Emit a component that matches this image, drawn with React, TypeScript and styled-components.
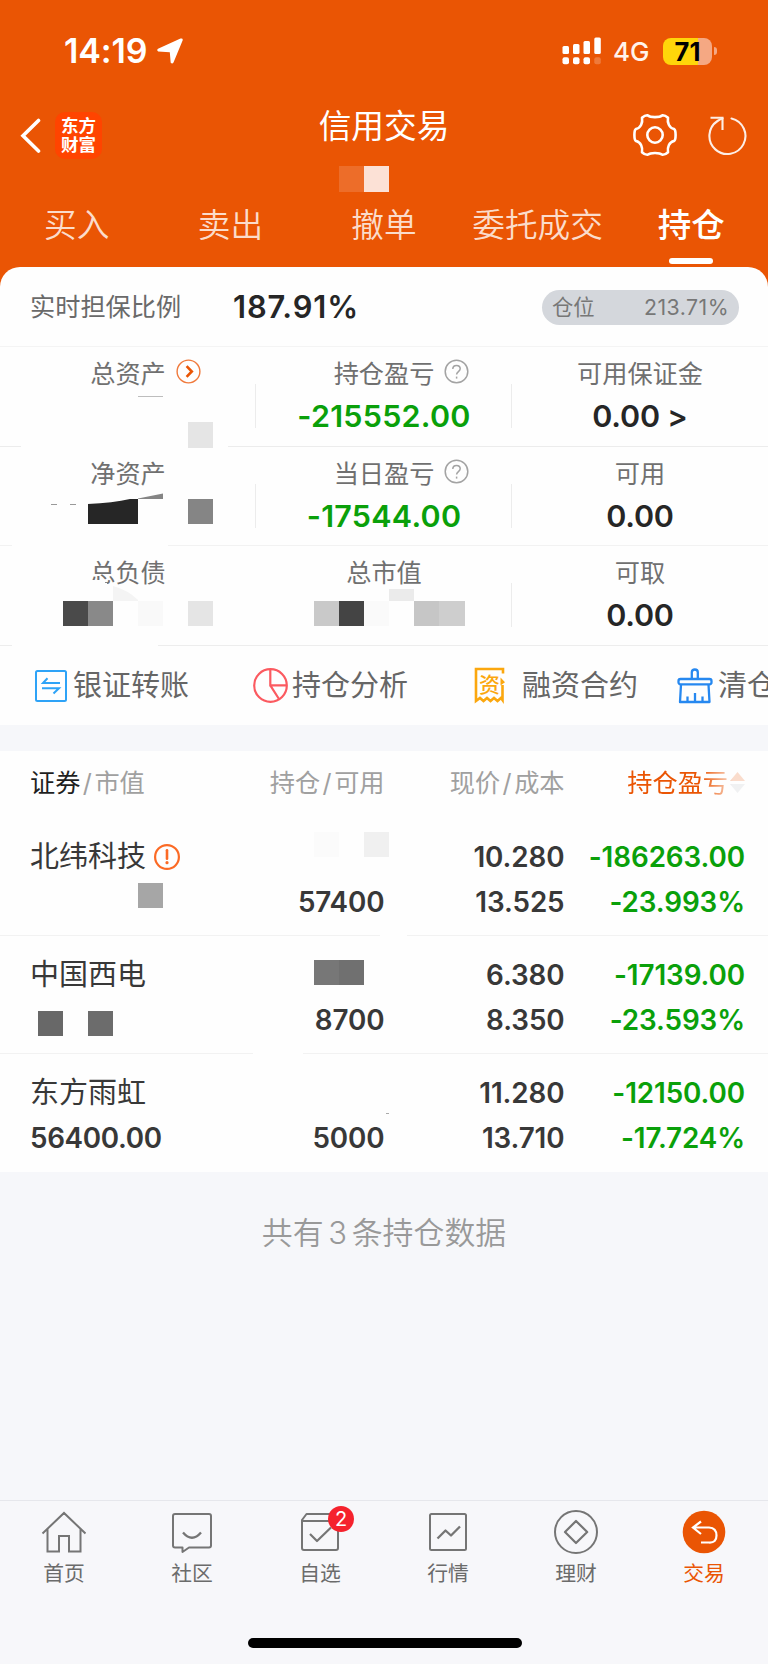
import React from "react";
import styled, { createGlobalStyle } from "styled-components";

const ORANGE = "#ea5504";
const GREEN = "#0aa00a";

const GlobalStyle = createGlobalStyle`
  *, *::before, *::after { box-sizing: border-box; }
  body {
    margin: 0;
    background: #f6f7fa;
    font-family: Inter, "Noto Sans CJK SC", sans-serif;
    color: #333;
  }
  svg { display: block; flex: none; }
`;

const Screen = styled.div`
  width: 768px;
  height: 1664px;
  display: flex;
  flex-direction: column;
  overflow: hidden;
  background: #f6f7fa;
`;

/* ---------- header ---------- */

const Header = styled.header`
  height: 287px;
  flex: none;
  background: ${ORANGE};
  color: #fff;
`;

const StatusBar = styled.div`
  height: 102px;
  display: flex;
  align-items: center;
  padding: 0 51px 0 64px;
`;

const Clock = styled.span`
  font-size: 34px;
  font-weight: 600;
  line-height: 40px;
  letter-spacing: -0.1px;
  width: 93px;
`;

const StatusRight = styled.div`
  margin-left: auto;
  display: flex;
  align-items: center;
`;

const Network = styled.span`
  font-size: 26px;
  font-weight: 500;
  line-height: 30px;
  padding-top: 2px;
  width: 50px;
  margin-left: 11px;
  color: #fff3ec;
`;

const Battery = styled.div`
  width: 49px;
  height: 27px;
  border-radius: 8px;
  background: linear-gradient(90deg, #ffd60a 0 35px, #f5a883 35px);
  color: #000;
  font-size: 25.5px;
  font-weight: 700;
  line-height: 28px;
  text-align: center;
`;

const BatteryTip = styled.div`
  width: 3px;
  height: 8px;
  margin-left: 2px;
  border-radius: 0 4px 4px 0;
  background: #f5a883;
`;

const TitleBar = styled.div`
  height: 94px;
  display: grid;
  grid-template-columns: 1fr 200px 1fr;
`;

const TitleLeft = styled.div`
  display: flex;
  align-items: flex-start;
  padding: 10px 0 0 20px;
  gap: 13px;
`;

const BackIcon = styled.svg`
  margin-top: 6px;
`;

const Logo = styled.div`
  width: 47px;
  height: 47px;
  border-radius: 10px;
  background: #ff4400;
  font-size: 17.5px;
  font-weight: 700;
  line-height: 19px;
  text-align: center;
  padding-top: 4px;
`;

const TitleCenter = styled.div`
  display: flex;
  flex-direction: column;
  align-items: center;
`;

const Title = styled.h1`
  margin: 4px 0 0;
  font-size: 32.7px;
  font-weight: 400;
  line-height: 40px;
`;

const AccountMask = styled.div`
  width: 50px;
  height: 26px;
  margin: 20px 40px 0 0;
  background: linear-gradient(90deg, #ed6d29 50%, #fce1d6 50%);
`;

const TitleRight = styled.div`
  display: flex;
  justify-content: flex-end;
  padding: 11px 20px 0 0;
  gap: 29px;
`;

const Tabs = styled.nav`
  display: grid;
  grid-template-columns: repeat(5, 1fr);
  padding-top: 9px;
`;

const Tab = styled.div<{ $active?: boolean }>`
  display: flex;
  flex-direction: column;
  align-items: center;
  font-size: ${(p) => (p.$active ? 33.5 : 32.7)}px;
  font-weight: ${(p) => (p.$active ? 500 : 350)};
  line-height: 40px;
  color: ${(p) => (p.$active ? "#fff" : "#fbdccb")};
`;

const TabLine = styled.div`
  width: 44px;
  height: 6px;
  margin-top: 13px;
  border-radius: 3px;
  background: #fff;
`;

/* ---------- account summary ---------- */

const Card = styled.section`
  background: #fefefe;
  border-radius: 20px 20px 0 0;
  margin-top: -20px;
  flex: none;
`;

const RatioRow = styled.div`
  height: 80px;
  display: flex;
  align-items: center;
  padding: 1px 29px 0 30px;
  border-bottom: 1px solid #f4f4f4;
`;

const RatioLabel = styled.span`
  width: 203px;
  font-size: 25.2px;
  line-height: 32px;
  color: #6a6a6a;
`;

const RatioValue = styled.span`
  font-size: 30.8px;
  font-weight: 600;
  line-height: 36px;
  letter-spacing: 0.9px;
  color: #262626;
`;

const Pill = styled.div`
  width: 197px;
  height: 35px;
  margin-left: auto;
  padding: 0 10px;
  border-radius: 18px;
  background: #d4d7dc;
  color: #777;
  font-size: 21.3px;
  line-height: 35px;
  display: flex;
  justify-content: space-between;
`;

const PillValue = styled.span`
  letter-spacing: 0.45px;
`;

const AssetRow = styled.div<{ $h: number; $line: string }>`
  height: ${(p) => p.$h}px;
  display: grid;
  grid-template-columns: repeat(3, 256px);
  border-bottom: 1px solid ${(p) => p.$line};
`;

const AssetCell = styled.div<{ $sep?: boolean }>`
  position: relative;
  display: flex;
  flex-direction: column;
  align-items: center;
  padding-top: 14px;

  &::after {
    content: "";
    position: absolute;
    right: 0;
    top: 37px;
    width: 1px;
    height: 44px;
    background: ${(p) => (p.$sep ? "#ececec" : "transparent")};
  }
`;

const AssetLabel = styled.div`
  position: relative;
  font-size: 25.2px;
  line-height: 26px;
  color: #707070;
`;

const LabelIcon = styled.svg`
  position: absolute;
  left: calc(100% + 10px);
  top: -2px;
`;

const AssetValue = styled.div<{ $green?: boolean }>`
  margin-top: 13px;
  font-size: 30.5px;
  font-weight: 600;
  line-height: 32px;
  letter-spacing: ${(p) => (p.$green ? 0.25 : -0.2)}px;
  color: ${(p) => (p.$green ? GREEN : "#262626")};
`;

const CellMask = styled.svg`
  position: absolute;
  left: 0;
  top: 0;
  overflow: visible;
  z-index: 1;
`;

/* ---------- shortcuts ---------- */

const Shortcuts = styled.div`
  height: 79px;
  display: flex;
  align-items: center;
  overflow: hidden;
  padding-left: 35px;
`;

const Shortcut = styled.div<{ $w: number; $gap: number }>`
  flex: none;
  width: ${(p) => p.$w}px;
  display: flex;
  align-items: center;
  gap: ${(p) => p.$gap}px;
  font-size: 29px;
  line-height: 36px;
  color: #666;
  white-space: nowrap;
`;

/* ---------- positions ---------- */

const Positions = styled.section`
  margin-top: 26px;
  flex: none;
  background: #fefefe;
`;

const columns = `
  display: grid;
  grid-template-columns: 208.5px 146px 180px 180.5px;
  padding: 0 23px 0 30px;
`;

const HeadRow = styled.div`
  ${columns}
  height: 67px;
  padding-top: 16px;
  font-size: 25.2px;
  line-height: 32px;
  color: #a0a0a0;
`;

const HeadCell = styled.div<{ $right?: boolean }>`
  display: flex;
  justify-content: ${(p) => (p.$right ? "flex-end" : "flex-start")};
`;

const Slash = styled.span`
  width: 14px;
  text-align: center;
`;

const Strong = styled.span`
  color: #1f1f1f;
  font-weight: 400;
`;

const SortCell = styled.div`
  display: flex;
  justify-content: flex-end;
  align-items: center;
  height: 32px;
  gap: 2px;
  color: ${ORANGE};
  mask-image: linear-gradient(90deg, #000 0 136px, rgba(0, 0, 0, 0.35) 162px, rgba(0, 0, 0, 0.2) 168px);
`;

const StockRow = styled.div`
  ${columns}
  position: relative;
  height: 118px;
  padding-top: 20.5px;
  border-bottom: 1px solid #f2f2f2;

  &:last-child { border-bottom: 0; }
`;

const StockCell = styled.div<{ $right?: boolean; $green?: boolean }>`
  display: flex;
  flex-direction: column;
  align-items: ${(p) => (p.$right ? "flex-end" : "flex-start")};
  gap: 9px;
  font-size: 27.8px;
  font-weight: 600;
  line-height: 36px;
  letter-spacing: ${(p) => (p.$right ? -0.1 : -0.35)}px;
  white-space: nowrap;
  color: ${(p) => (p.$green ? GREEN : "#383838")};
`;

const Line = styled.div`
  height: 36px;
`;

const StockName = styled.div`
  display: flex;
  align-items: center;
  gap: 8px;
  height: 36px;
  font-size: 29px;
  font-weight: 400;
  letter-spacing: 0;
`;

const Summary = styled.p`
  margin: 41px 0 0;
  flex: 1;
  text-align: center;
  font-size: 30.9px;
  line-height: 40px;
  font-weight: 350;
  color: #999;
  word-spacing: -4px;
`;

/* ---------- bottom bar ---------- */

const BottomBar = styled.footer`
  height: 164px;
  flex: none;
  border-top: 1px solid #e6e7ec;
  background: #f7f7fa;
  display: flex;
  flex-direction: column;
  align-items: center;
`;

const BottomTabs = styled.div`
  width: 100%;
  display: grid;
  grid-template-columns: repeat(6, 1fr);
  padding-top: 8px;
`;

const BottomTab = styled.div<{ $active?: boolean }>`
  position: relative;
  display: flex;
  flex-direction: column;
  align-items: center;
  gap: 7px;
  font-size: 20.8px;
  line-height: 24px;
  color: ${(p) => (p.$active ? ORANGE : "#6b6b6b")};
`;

const Badge = styled.span`
  position: absolute;
  left: 72px;
  top: -3px;
  width: 26px;
  height: 26px;
  border-radius: 50%;
  background: #f5222d;
  color: #fff;
  font-size: 20px;
  line-height: 26px;
  text-align: center;
`;

const HomeIndicator = styled.div`
  width: 274px;
  height: 10px;
  border-radius: 5px;
  margin: 52px 0 0 2px;
  background: #000;
`;

/* ---------- icons ---------- */

const HelpIcon = () => (
  <LabelIcon width="25" height="25" viewBox="0 0 25 25" fill="none" stroke="#a3a3a3" strokeWidth="1.5">
    <circle cx="12.5" cy="12.5" r="11.3" />
    <path d="M8.8 10.1c0-2.2 1.6-3.7 3.7-3.7s3.7 1.4 3.7 3.4c0 2.7-3.6 3-3.6 5.8" />
    <path d="M12.6 17.6v2" />
  </LabelIcon>
);

const MoreIcon = () => (
  <LabelIcon width="25" height="25" viewBox="0 0 25 25" fill="none" stroke="#f07a3c" strokeWidth="1.4">
    <circle cx="12.5" cy="12.5" r="11.4" />
    <path d="M10.6 7.2l5.2 5.3-5.2 5.3" stroke={ORANGE} strokeWidth="2.6" />
  </LabelIcon>
);

const SignalIcon = () => (
  <svg width="40" height="28" viewBox="0 0 40 28" fill="#fff">
    <rect x="0.5" y="9" width="6.5" height="8" rx="1.5" />
    <rect x="11" y="7" width="6.5" height="10" rx="1.5" />
    <rect x="21.5" y="4" width="6.5" height="13" rx="1.5" />
    <rect x="32.3" y="0.5" width="6.5" height="16.5" rx="1.5" />
    <rect x="0.5" y="20.3" width="6.5" height="7" rx="2" />
    <rect x="11" y="20.3" width="6.5" height="7" rx="2" />
    <rect x="21.5" y="20.3" width="6.5" height="7" rx="2" />
    <rect x="32.3" y="20.3" width="6.5" height="7" rx="2" opacity="0.22" />
  </svg>
);

const GearIcon = () => (
  <svg width="44" height="44" viewBox="-22 -22 44 44" fill="none" stroke="#fff" strokeWidth="2.6" strokeLinejoin="round">
    <path d="M-7.5 -19.800C-4.500 -17.300 4.500 -17.300 7.500 -19.800Q10 -20 13 -17.200C12.200 -12.500 14 -7 19 -6Q20.600 -5.200 20.600 0T19 6C14 7 12.200 12.500 13 17.200Q10 20 7.500 19.800C4.500 17.300 -4.500 17.300 -7.500 19.800Q-10 20 -13 17.200C-12.200 12.500 -14 7 -19 6Q-20.600 5.200 -20.600 0T-19 -6C-14 -7 -12.200 -12.500 -13 -17.200Q-10 -20 -7.500 -19.800Z" />
    <circle r="7.7" />
  </svg>
);

const RefreshIcon = () => (
  <svg width="42" height="44" viewBox="0 0 42 44" fill="none" stroke="#fdeee6" strokeWidth="2.1">
    <path d="M25.500 5.500A18 18 0 1 1 11.500 8Q14.500 6 16.500 5.500" strokeLinecap="round" />
    <path d="M4.500 4.800H16.500V17" />
  </svg>
);

const TransferIcon = () => (
  <svg width="32" height="32" viewBox="0 0 32 32" fill="none" stroke="#2ea3f7" strokeWidth="2">
    <rect x="1" y="1" width="30" height="30" rx="1.500" />
    <path d="M12.500 8.200L8 13H25M7 18.200H24L18.500 23.500" />
  </svg>
);

const PieIcon = () => (
  <svg width="35" height="35" viewBox="0 0 35 35" fill="none" stroke="#fb5a60" strokeWidth="2.2">
    <circle cx="17.500" cy="17.500" r="16.300" />
    <path d="M17.300 1.500V17.300H33.500M17.300 17.300L26 31" />
  </svg>
);

const ContractIcon = () => (
  <svg width="32" height="37" viewBox="0 0 32 37" fill="none" stroke="#fba70e" strokeWidth="2.600">
    <path d="M29 6.500V2H2V34l4-3 3.500 3 3.500-3 3.500 3 3.500-3 3.500 3 3.500-3 1.500 2V18" />
    <path d="M26.500 10.500L31 15.200L26.500 18.500Z" fill="#fba70e" stroke="none" />
    <text x="15.500" y="24.500" fontSize="21" fontWeight="500" textAnchor="middle" fill="#fba70e" stroke="none">资</text>
  </svg>
);

const BroomIcon = () => (
  <svg width="36" height="36" viewBox="0 0 36 36" fill="none" stroke="#2688f0" strokeWidth="2.300" strokeLinejoin="round">
    <path d="M14.800 11V4.200Q14.800 1.500 17.800 1.500T20.800 4.200V11" />
    <rect x="1.500" y="11" width="33" height="5.300" rx="2" />
    <path d="M4 16.500L3 34H32.500L31.500 16.500M10.500 34V28.500M18 34V25M25.500 34V28.500" />
  </svg>
);

const WarnIcon = () => (
  <svg width="26" height="26" viewBox="0 0 26 26" fill="none" stroke="#fb6a25" strokeWidth="2.2">
    <circle cx="13" cy="13" r="11.900" />
    <path d="M13 6.300V14.800" strokeWidth="2.600" strokeLinecap="round" />
    <circle cx="13" cy="18.700" r="1.600" fill="#fb6a25" stroke="none" />
  </svg>
);

const SortIcon = () => (
  <svg width="15" height="22" viewBox="0 0 15 22">
    <path d="M7.500 0L15 9H0Z" fill={ORANGE} />
    <path d="M7.500 21L15 12H0Z" fill="#bbbdc4" />
  </svg>
);

const TabIcon = ({ children }: { children: React.ReactNode }) => (
  <svg width="46" height="46" viewBox="0 0 46 46" fill="none" stroke="#757575" strokeWidth="2" strokeLinejoin="round">
    {children}
  </svg>
);

/* ---------- redaction tiles ---------- */

type Tile = [x: number, y: number, w: number, h: number, fill: string];

const Mask = ({ tiles, children }: { tiles: Tile[]; children?: React.ReactNode }) => (
  <CellMask width="256" height="100" viewBox="0 0 256 100" shapeRendering="crispEdges">
    {tiles.map(([x, y, w, h, fill]) => (
      <rect key={`${x}-${y}`} x={x} y={y} width={w} height={h} fill={fill} />
    ))}
    {children}
  </CellMask>
);

type Stock = {
  name: string;
  warn?: boolean;
  value?: string;
  available: string;
  price: string;
  cost: string;
  profit: string;
  rate: string;
  tiles: Tile[];
};

const stocks: Stock[] = [
  {
    name: "北纬科技",
    warn: true,
    available: "57400",
    price: "10.280",
    cost: "13.525",
    profit: "-186263.00",
    rate: "-23.993%",
    tiles: [
      [314, 14, 25, 25, "#fbfbfb"],
      [364, 14, 25, 25, "#f0f0f0"],
      [138, 65, 25, 25, "#a6a6a6"],
      [380, 117, 27, 1, "#fefefe"],
    ],
  },
  {
    name: "中国西电",
    available: "8700",
    price: "6.380",
    cost: "8.350",
    profit: "-17139.00",
    rate: "-23.593%",
    tiles: [
      [314, 24, 25, 25, "#777777"],
      [339, 24, 25, 25, "#707070"],
      [38, 75, 25, 25, "#686868"],
      [88, 75, 25, 25, "#6c6c6c"],
      [253, 117, 50, 1, "#fefefe"],
    ],
  },
  {
    name: "东方雨虹",
    value: "56400.00",
    available: "5000",
    price: "11.280",
    cost: "13.710",
    profit: "-12150.00",
    rate: "-17.724%",
    tiles: [[386, 59, 3, 1, "#aaaaaa"]],
  },
];

export default function App() {
  return (
    <Screen>
      <GlobalStyle />
      <Header>
        <StatusBar>
          <Clock>14:19</Clock>
          <svg width="26" height="27" viewBox="0 0 26 27" fill="#fff">
            <path d="M23.500 0.600Q26 -0.200 25.700 2.200L16.500 24.500Q15.300 26.500 13.700 24.800L12.800 14.200L1.200 13.500Q-0.700 12.200 1 10.800Z" />
          </svg>
          <StatusRight>
            <SignalIcon />
            <Network>4G</Network>
            <Battery>71</Battery>
            <BatteryTip />
          </StatusRight>
        </StatusBar>
        <TitleBar>
          <TitleLeft>
            <BackIcon width="22" height="36" viewBox="0 0 22 36" fill="none" stroke="#fff" strokeWidth="3.600" strokeLinecap="round">
              <path d="M18.500 2.500L3 17.800L18.500 33" />
            </BackIcon>
            <Logo>
              东方
              <br />
              财富
            </Logo>
          </TitleLeft>
          <TitleCenter>
            <Title>信用交易</Title>
            <AccountMask />
          </TitleCenter>
          <TitleRight>
            <GearIcon />
            <RefreshIcon />
          </TitleRight>
        </TitleBar>
        <Tabs>
          <Tab>买入</Tab>
          <Tab>卖出</Tab>
          <Tab>撤单</Tab>
          <Tab>委托成交</Tab>
          <Tab $active>
            持仓
            <TabLine />
          </Tab>
        </Tabs>
      </Header>

      <Card>
        <RatioRow>
          <RatioLabel>实时担保比例</RatioLabel>
          <RatioValue>187.91%</RatioValue>
          <Pill>
            <span>仓位</span>
            <PillValue>213.71%</PillValue>
          </Pill>
        </RatioRow>

        <AssetRow $h={100} $line="#ececec">
          <AssetCell $sep>
            <AssetLabel>
              总资产
              <MoreIcon />
            </AssetLabel>
            <Mask
              tiles={[
                [21, 98, 207, 3, "#fefefe"],
                [188, 75, 25, 26, "#e5e5e5"],
              ]}
            >
              <path d="M138 49.500L144 48.500H163V49.500Z" fill="#bdbdbd" />
            </Mask>
          </AssetCell>
          <AssetCell $sep>
            <AssetLabel>
              持仓盈亏
              <HelpIcon />
            </AssetLabel>
            <AssetValue $green>-215552.00</AssetValue>
          </AssetCell>
          <AssetCell>
            <AssetLabel>可用保证金</AssetLabel>
            <AssetValue>0.00 &gt;</AssetValue>
          </AssetCell>
        </AssetRow>

        <AssetRow $h={99} $line="#f2f2f2">
          <AssetCell $sep>
            <AssetLabel>净资产</AssetLabel>
            <Mask
              tiles={[
                [12, 97, 156, 3, "#fefefe"],
                [188, 52, 25, 25, "#858585"],
                [51, 57, 6, 1, "#999999"],
                [70, 57, 6, 1, "#999999"],
              ]}
            >
              <path d="M88 57Q113 56 130 52H138V77H88Z" fill="#262626" shapeRendering="auto" />
              <path d="M138 51.500L163 46.500V52H138Z" fill="#858585" shapeRendering="auto" />
            </Mask>
          </AssetCell>
          <AssetCell $sep>
            <AssetLabel>
              当日盈亏
              <HelpIcon />
            </AssetLabel>
            <AssetValue $green>-17544.00</AssetValue>
          </AssetCell>
          <AssetCell>
            <AssetLabel>可用</AssetLabel>
            <AssetValue>0.00</AssetValue>
          </AssetCell>
        </AssetRow>

        <AssetRow $h={100} $line="#ededed">
          <AssetCell>
            <AssetLabel>总负债</AssetLabel>
            <Mask
              tiles={[
                [12, 98, 146, 3, "#fefefe"],
                [63, 55, 25, 25, "#4a4a4a"],
                [88, 55, 25, 25, "#898989"],
                [138, 55, 25, 25, "#f9f9f9"],
                [188, 55, 25, 25, "#e5e5e5"],
              ]}
            >
              <path d="M89 33.500H100L110 39V41H89Z" fill="#fefefe" />
              <path d="M113 40Q128 44 138 54V55H113Z" fill="#f4f4f4" shapeRendering="auto" />
            </Mask>
          </AssetCell>
          <AssetCell $sep>
            <AssetLabel>总市值</AssetLabel>
            <Mask
              tiles={[
                [58, 55, 25, 25, "#c9c9c9"],
                [83, 55, 25, 25, "#444444"],
                [108, 55, 25, 25, "#fafafa"],
                [133, 43, 25, 12, "#ebebeb"],
                [158, 55, 25, 25, "#c6c6c6"],
                [183, 55, 26, 25, "#cecece"],
              ]}
            />
          </AssetCell>
          <AssetCell>
            <AssetLabel>可取</AssetLabel>
            <AssetValue>0.00</AssetValue>
          </AssetCell>
        </AssetRow>

        <Shortcuts>
          <Shortcut $w={218} $gap={6}>
            <TransferIcon />
            银证转账
          </Shortcut>
          <Shortcut $w={221} $gap={4}>
            <PieIcon />
            持仓分析
          </Shortcut>
          <Shortcut $w={203} $gap={16}>
            <ContractIcon />
            融资合约
          </Shortcut>
          <Shortcut $w={100} $gap={5}>
            <BroomIcon />
            清仓
          </Shortcut>
        </Shortcuts>
      </Card>

      <Positions>
        <HeadRow>
          <HeadCell>
            <Strong>证券</Strong>
            <Slash>/</Slash>市值
          </HeadCell>
          <HeadCell $right>
            持仓<Slash>/</Slash>可用
          </HeadCell>
          <HeadCell $right>
            现价<Slash>/</Slash>成本
          </HeadCell>
          <SortCell>
            持仓盈亏
            <SortIcon />
          </SortCell>
        </HeadRow>
        {stocks.map((s) => (
          <StockRow key={s.name}>
            <StockCell>
              <StockName>
                {s.name}
                {s.warn && <WarnIcon />}
              </StockName>
              <Line>{s.value}</Line>
            </StockCell>
            <StockCell $right>
              <Line />
              <Line>{s.available}</Line>
            </StockCell>
            <StockCell $right>
              <Line>{s.price}</Line>
              <Line>{s.cost}</Line>
            </StockCell>
            <StockCell $right $green>
              <Line>{s.profit}</Line>
              <Line>{s.rate}</Line>
            </StockCell>
            <Mask tiles={s.tiles} />
          </StockRow>
        ))}
      </Positions>

      <Summary>共有 3 条持仓数据</Summary>

      <BottomBar>
        <BottomTabs>
          <BottomTab>
            <TabIcon>
              <path d="M1.500 24.500L23 4L44.500 24.500M6.500 20V42.500H18V27H28V42.500H39.500V20" strokeLinejoin="miter" />
            </TabIcon>
            首页
          </BottomTab>
          <BottomTab>
            <TabIcon>
              <path d="M6 5H40Q42 5 42 7V36.500Q42 38.500 40 38.500H20L13.500 43V38.500H6Q4 38.500 4 36.500V7Q4 5 6 5Z" />
              <path d="M14 23.500Q23 34 32 23.500" strokeWidth="2.300" />
            </TabIcon>
            社区
          </BottomTab>
          <BottomTab>
            <TabIcon>
              <path d="M9.500 5H37L41 10V39Q41 41 39 41H7Q5 41 5 39V11ZM5 12H41" />
              <path d="M13 25L20 32L34 18.500" strokeWidth="2.200" />
            </TabIcon>
            自选
            <Badge>2</Badge>
          </BottomTab>
          <BottomTab>
            <TabIcon>
              <rect x="5" y="5" width="36" height="36" rx="1.500" />
              <path d="M12.500 29.500L20.500 21.500L26 26.500L35 17.500" strokeWidth="2.300" />
            </TabIcon>
            行情
          </BottomTab>
          <BottomTab>
            <TabIcon>
              <circle cx="23" cy="23" r="21" />
              <path d="M23 12L34.200 23L23 34L12 23Z" strokeWidth="2.200" />
            </TabIcon>
            理财
          </BottomTab>
          <BottomTab $active>
            <TabIcon>
              <circle cx="23" cy="23" r="21.300" fill={ORANGE} stroke="none" />
              <path d="M20 12.500L12 18.500L20 25M12.500 18.500H28Q35.500 19 35.500 26.500T28 33.500H20" stroke="#fff" strokeWidth="2.200" strokeLinejoin="miter" />
            </TabIcon>
            交易
          </BottomTab>
        </BottomTabs>
        <HomeIndicator />
      </BottomBar>
    </Screen>
  );
}
